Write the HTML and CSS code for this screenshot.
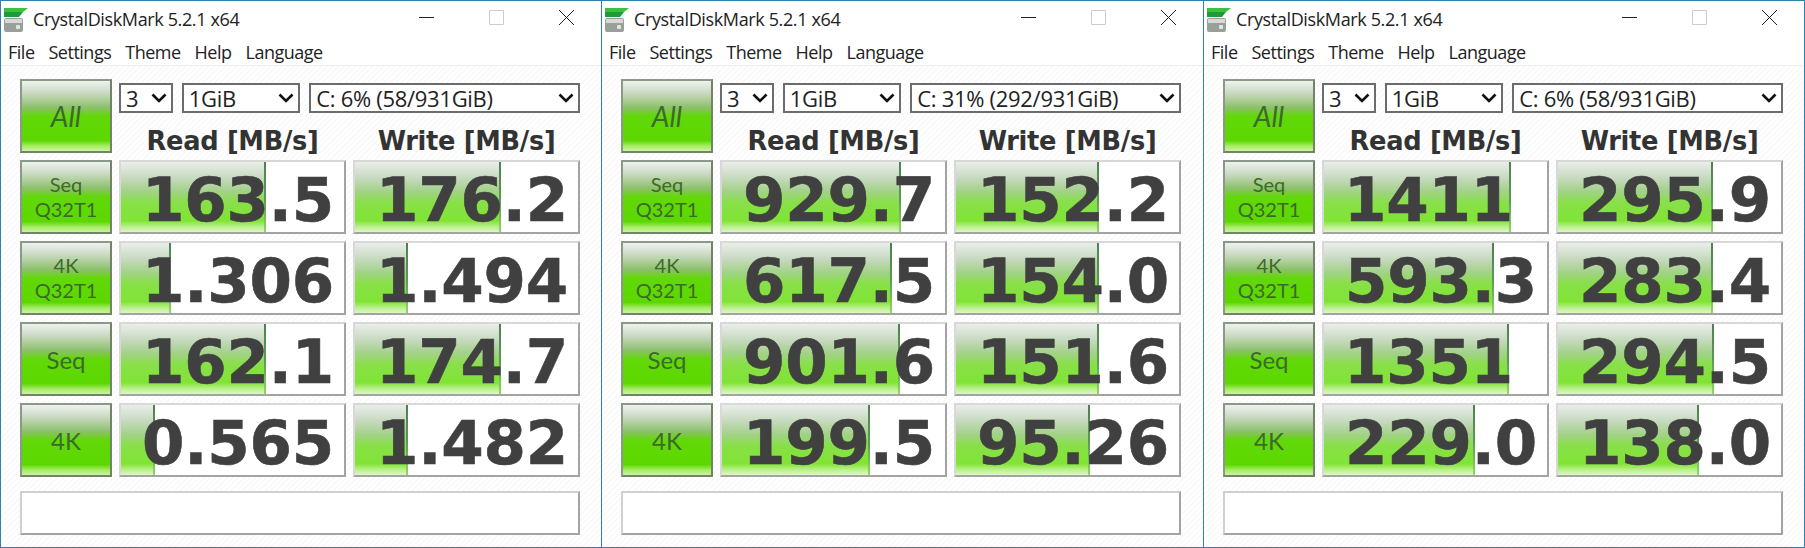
FILE: index.html
```html
<!DOCTYPE html>
<html lang="en">
<head>
    <meta charset="UTF-8">
    <title>CrystalDiskMark 5.2.1 x64</title>
    <link rel="stylesheet" href="styles.css">
</head>
<body>
    <div class="desktop">

        <div class="window">
            <div class="titlebar">
                <svg class="app-icon" viewBox="0 0 24 25"><path d="M0 1h24l-5 4H0z" fill="#3cc13c"/><path d="M0 5h19l-4 5H0z" fill="#1f9a3a"/><rect y="11" width="19" height="14" rx="2" fill="#9a9f9a"/><rect x="1" y="12" width="17" height="4" fill="#d6d9d6"/><rect x="12" y="18" width="4" height="4" rx="1" fill="#dfe8df"/></svg>
                <span class="title">CrystalDiskMark 5.2.1 x64</span>
                <div class="controls">
                    <svg viewBox="0 0 15 15"><path d="M0 7.5h15" stroke="#222" fill="none"/></svg>
                    <svg viewBox="0 0 15 15"><path d="M.5.5h14v14H.5z" stroke="#ccc" fill="none"/></svg>
                    <svg viewBox="0 0 15 15"><path d="M0 0l15 15M15 0L0 15" stroke="#222" fill="none"/></svg>
                </div>
            </div>
            <div class="menu"><span>File</span><span>Settings</span><span>Theme</span><span>Help</span><span>Language</span></div>
            <div class="panel">
                <div class="btn btn-all">All</div>
                <div class="top">
                    <div class="combos">
                        <div class="combo combo-count">3<svg viewBox="0 0 16 10"><path d="M1.5 1.5L8 8l6.5-6.5"/></svg></div>
                        <div class="combo combo-size">1GiB<svg viewBox="0 0 16 10"><path d="M1.5 1.5L8 8l6.5-6.5"/></svg></div>
                        <div class="combo combo-drive">C: 6% (58/931GiB)<svg viewBox="0 0 16 10"><path d="M1.5 1.5L8 8l6.5-6.5"/></svg></div>
                    </div>
                    <div class="heads"><span>Read [MB/s]</span><span>Write [MB/s]</span></div>
                </div>
                <div class="btn">Seq<br>Q32T1</div>
                <div class="cell"><div class="bar" style="width:145px"></div><span class="val">163.5</span></div>
                <div class="cell"><div class="bar" style="width:146px"></div><span class="val">176.2</span></div>
                <div class="btn">4K<br>Q32T1</div>
                <div class="cell"><div class="bar" style="width:50px"></div><span class="val">1.306</span></div>
                <div class="cell"><div class="bar" style="width:53px"></div><span class="val">1.494</span></div>
                <div class="btn btn-big">Seq</div>
                <div class="cell"><div class="bar" style="width:145px"></div><span class="val">162.1</span></div>
                <div class="cell"><div class="bar" style="width:146px"></div><span class="val">174.7</span></div>
                <div class="btn btn-big">4K</div>
                <div class="cell"><div class="bar" style="width:34px"></div><span class="val">0.565</span></div>
                <div class="cell"><div class="bar" style="width:53px"></div><span class="val">1.482</span></div>
                <div class="status"></div>
            </div>
        </div>

        <div class="window">
            <div class="titlebar">
                <svg class="app-icon" viewBox="0 0 24 25"><path d="M0 1h24l-5 4H0z" fill="#3cc13c"/><path d="M0 5h19l-4 5H0z" fill="#1f9a3a"/><rect y="11" width="19" height="14" rx="2" fill="#9a9f9a"/><rect x="1" y="12" width="17" height="4" fill="#d6d9d6"/><rect x="12" y="18" width="4" height="4" rx="1" fill="#dfe8df"/></svg>
                <span class="title">CrystalDiskMark 5.2.1 x64</span>
                <div class="controls">
                    <svg viewBox="0 0 15 15"><path d="M0 7.5h15" stroke="#222" fill="none"/></svg>
                    <svg viewBox="0 0 15 15"><path d="M.5.5h14v14H.5z" stroke="#ccc" fill="none"/></svg>
                    <svg viewBox="0 0 15 15"><path d="M0 0l15 15M15 0L0 15" stroke="#222" fill="none"/></svg>
                </div>
            </div>
            <div class="menu"><span>File</span><span>Settings</span><span>Theme</span><span>Help</span><span>Language</span></div>
            <div class="panel">
                <div class="btn btn-all">All</div>
                <div class="top">
                    <div class="combos">
                        <div class="combo combo-count">3<svg viewBox="0 0 16 10"><path d="M1.5 1.5L8 8l6.5-6.5"/></svg></div>
                        <div class="combo combo-size">1GiB<svg viewBox="0 0 16 10"><path d="M1.5 1.5L8 8l6.5-6.5"/></svg></div>
                        <div class="combo combo-drive">C: 31% (292/931GiB)<svg viewBox="0 0 16 10"><path d="M1.5 1.5L8 8l6.5-6.5"/></svg></div>
                    </div>
                    <div class="heads"><span>Read [MB/s]</span><span>Write [MB/s]</span></div>
                </div>
                <div class="btn">Seq<br>Q32T1</div>
                <div class="cell"><div class="bar" style="width:179px"></div><span class="val">929.7</span></div>
                <div class="cell"><div class="bar" style="width:143px"></div><span class="val">152.2</span></div>
                <div class="btn">4K<br>Q32T1</div>
                <div class="cell"><div class="bar" style="width:170px"></div><span class="val">617.5</span></div>
                <div class="cell"><div class="bar" style="width:143px"></div><span class="val">154.0</span></div>
                <div class="btn btn-big">Seq</div>
                <div class="cell"><div class="bar" style="width:178px"></div><span class="val">901.6</span></div>
                <div class="cell"><div class="bar" style="width:143px"></div><span class="val">151.6</span></div>
                <div class="btn btn-big">4K</div>
                <div class="cell"><div class="bar" style="width:148px"></div><span class="val">199.5</span></div>
                <div class="cell"><div class="bar" style="width:134px"></div><span class="val">95.26</span></div>
                <div class="status"></div>
            </div>
        </div>

        <div class="window">
            <div class="titlebar">
                <svg class="app-icon" viewBox="0 0 24 25"><path d="M0 1h24l-5 4H0z" fill="#3cc13c"/><path d="M0 5h19l-4 5H0z" fill="#1f9a3a"/><rect y="11" width="19" height="14" rx="2" fill="#9a9f9a"/><rect x="1" y="12" width="17" height="4" fill="#d6d9d6"/><rect x="12" y="18" width="4" height="4" rx="1" fill="#dfe8df"/></svg>
                <span class="title">CrystalDiskMark 5.2.1 x64</span>
                <div class="controls">
                    <svg viewBox="0 0 15 15"><path d="M0 7.5h15" stroke="#222" fill="none"/></svg>
                    <svg viewBox="0 0 15 15"><path d="M.5.5h14v14H.5z" stroke="#ccc" fill="none"/></svg>
                    <svg viewBox="0 0 15 15"><path d="M0 0l15 15M15 0L0 15" stroke="#222" fill="none"/></svg>
                </div>
            </div>
            <div class="menu"><span>File</span><span>Settings</span><span>Theme</span><span>Help</span><span>Language</span></div>
            <div class="panel">
                <div class="btn btn-all">All</div>
                <div class="top">
                    <div class="combos">
                        <div class="combo combo-count">3<svg viewBox="0 0 16 10"><path d="M1.5 1.5L8 8l6.5-6.5"/></svg></div>
                        <div class="combo combo-size">1GiB<svg viewBox="0 0 16 10"><path d="M1.5 1.5L8 8l6.5-6.5"/></svg></div>
                        <div class="combo combo-drive">C: 6% (58/931GiB)<svg viewBox="0 0 16 10"><path d="M1.5 1.5L8 8l6.5-6.5"/></svg></div>
                    </div>
                    <div class="heads"><span>Read [MB/s]</span><span>Write [MB/s]</span></div>
                </div>
                <div class="btn">Seq<br>Q32T1</div>
                <div class="cell"><div class="bar" style="width:187px"></div><span class="val val-int">1411</span></div>
                <div class="cell"><div class="bar" style="width:155px"></div><span class="val">295.9</span></div>
                <div class="btn">4K<br>Q32T1</div>
                <div class="cell"><div class="bar" style="width:170px"></div><span class="val">593.3</span></div>
                <div class="cell"><div class="bar" style="width:155px"></div><span class="val">283.4</span></div>
                <div class="btn btn-big">Seq</div>
                <div class="cell"><div class="bar" style="width:185px"></div><span class="val val-int">1351</span></div>
                <div class="cell"><div class="bar" style="width:156px"></div><span class="val">294.5</span></div>
                <div class="btn btn-big">4K</div>
                <div class="cell"><div class="bar" style="width:151px"></div><span class="val">229.0</span></div>
                <div class="cell"><div class="bar" style="width:141px"></div><span class="val">138.0</span></div>
                <div class="status"></div>
            </div>
        </div>

    </div>
</body>
</html>
```

FILE: styles.css
```css
html, body {
    margin: 0;
    overflow: hidden;
}
.desktop {
    display: flex;
    width: 1805px;
    height: 548px;
    font-family: "Open Sans", sans-serif;
    color: #222;
}
.window {
    flex: 0 0 602px;
    box-sizing: border-box;
    height: 548px;
    border: 1px solid #2f80ad;
    background: #fff;
    margin-right: -1px;
}
.window:nth-child(2) {
    flex-basis: 603px;
}

/* title bar */
.titlebar {
    display: flex;
    align-items: center;
    height: 32px;
    padding: 0 27px 0 3px;
}
.app-icon {
    width: 24px;
    height: 25px;
    margin: 4px 5px 0 0;
}
.title {
    font-size: 18px;
    letter-spacing: -0.37px;
    padding-top: 3px;
}
.controls {
    display: flex;
    gap: 55px;
    margin-left: auto;
}
.controls svg {
    width: 15px;
    height: 15px;
    display: block;
}

/* menu */
.menu {
    display: flex;
    gap: 14px;
    align-items: center;
    box-sizing: border-box;
    height: 33px;
    padding: 5px 0 0 7px;
    font-size: 18px;
    letter-spacing: -0.5px;
    border-bottom: 1px solid #eee;
}

/* main panel */
.panel {
    display: grid;
    grid-template-columns: 92px 227px 227px;
    grid-auto-rows: 74px;
    gap: 7px;
    height: 481px;
    box-sizing: border-box;
    padding: 13px 0 0 19px;
    background: repeating-linear-gradient(135deg, #fff, #fff 2px, #fafafa 2px, #fafafa 4px);
}
.btn {
    display: flex;
    align-items: center;
    justify-content: center;
    text-align: center;
    box-sizing: border-box;
    border: 2px solid #72836a;
    border-top-color: #8b9a88;
    border-left-color: #8b9a88;
    background: linear-gradient(#eef2ee 0%, #cfdcc9 15%, #8cc06a 38%, #62d808 50%, #5cd800 85%, #a8ec68 93%, #c9f3a0 100%);
    color: #3c6a2a;
    font-family: Lato, sans-serif;
    font-size: 20px;
    line-height: 25px;
}
.btn-big {
    font-size: 24px;
}
.btn-all {
    font-size: 28px;
    font-style: italic;
}
.top {
    grid-column: 2 / 4;
    display: flex;
    flex-direction: column;
}
.combos {
    display: flex;
    margin-top: 4px;
}
.combo {
    display: flex;
    align-items: center;
    justify-content: space-between;
    box-sizing: border-box;
    height: 30px;
    padding: 0 4px 0 5px;
    border: 2px solid #6c6c6c;
    background: #fff;
    font-size: 22px;
    letter-spacing: -0.3px;
}
.combo svg {
    width: 16px;
    height: 10px;
}
.combo path {
    fill: none;
    stroke: #111;
    stroke-width: 2.6;
}
.combo-count {
    width: 54px;
    margin-right: 9px;
}
.combo-size {
    width: 119px;
    margin-right: 9px;
}
.combo-drive {
    width: 272px;
}
.heads {
    display: grid;
    grid-template-columns: 227px 227px;
    gap: 7px;
    margin-top: 13px;
    font-family: "DejaVu Sans", sans-serif;
    font-weight: bold;
    font-size: 25.7px;
    line-height: 30px;
    letter-spacing: -0.3px;
    text-align: center;
    color: #333;
}
.cell {
    position: relative;
    display: flex;
    align-items: center;
    justify-content: flex-end;
    box-sizing: border-box;
    padding: 5px 10px 0 0;
    border: 2px solid #a3a3a3;
    border-top-color: #d8d8d8;
    border-left-color: #d8d8d8;
    background: #fff;
    overflow: hidden;
}
.bar {
    position: absolute;
    left: 0;
    top: 0;
    bottom: 0;
    background:
        linear-gradient(#4f8050 0%, #5d9a58 55%, #8fd860 100%) right / 2px 100% no-repeat,
        linear-gradient(#e9eee9 0%, #c8dac1 22%, #a2d288 42%, #88e048 58%, #80e434 84%, #b8ef88 92%, #dcf8c4 100%);
}
.val {
    position: relative;
    font-family: "DejaVu Sans", sans-serif;
    font-weight: bold;
    font-size: 61px;
    line-height: 68px;
    letter-spacing: -0.2px;
    color: #404040;
    -webkit-text-stroke: 0.6px #404040;
}
/* whole numbers stop short by the width of the dot */
.val-int {
    margin-right: 24px;
}
.status {
    grid-column: 1 / 4;
    height: 44px;
    margin-top: 7px;
    box-sizing: border-box;
    border: 2px solid #a3a3a3;
    border-top-color: #d0d0d0;
    border-left-color: #d0d0d0;
    background: #fff;
}
```
